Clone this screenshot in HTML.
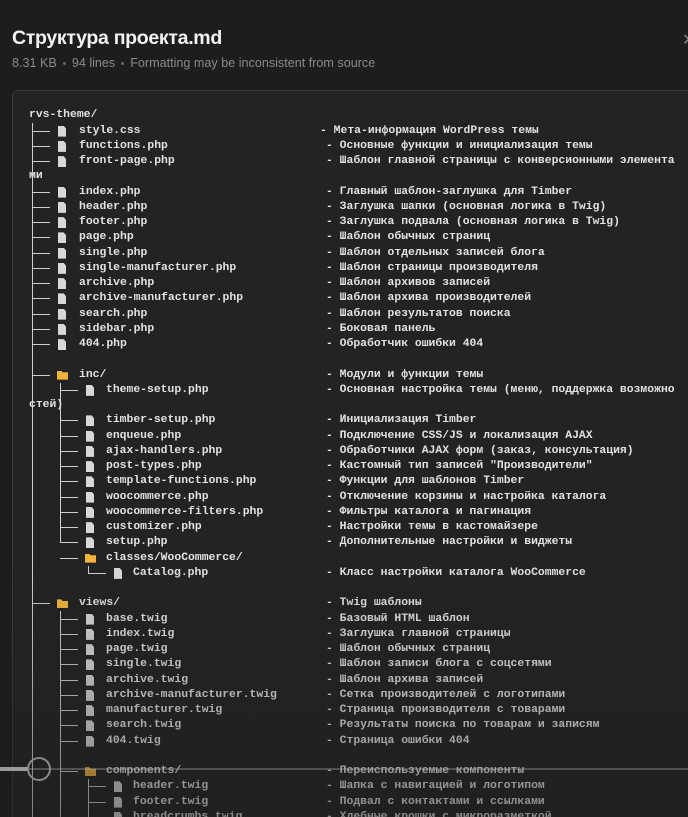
<!DOCTYPE html>
<html><head><meta charset="utf-8"><style>
html,body{margin:0;padding:0;overflow:hidden;width:688px;height:817px;}
body{background:#1d1d1d;position:relative;font-family:"Liberation Sans","Noto Sans CJK SC",sans-serif;}
.t{position:absolute;left:12px;top:27px;font-size:19.5px;font-weight:bold;color:#f2f2f2;letter-spacing:-0.3px;}
.m{position:absolute;left:12px;top:56px;font-size:12.6px;color:#8a8a8a;}
.m b{display:inline-block;width:3px;height:3px;border-radius:50%;background:#666;vertical-align:middle;margin:0 6px;}
.x{position:absolute;left:682px;top:30px;color:#888;font-size:16px;}
.box{position:absolute;left:12px;top:90px;width:700px;height:740px;border:1px solid #3a3a3a;border-radius:7px;background:#232323;}
.rows{position:absolute;left:0;top:108.4px;width:688px;font-family:"Liberation Mono","DejaVu Sans Mono",monospace;font-size:11.4px;font-weight:bold;color:#e2e2e2;}
.r{position:relative;height:15.25px;line-height:15.25px;white-space:pre;}
.r span{position:absolute;top:0;}
.h{position:absolute;top:7px;width:18px;height:1px;background:#cfcfcf;}
.f{position:absolute;top:2px;width:8px;height:11px;background:#d8d8d8;clip-path:polygon(0 0,70% 0,100% 25%,100% 100%,0 100%);}
.d{position:absolute;top:3px;width:11px;height:9px;background:#f2b43a;clip-path:polygon(0 0,40% 0,50% 18%,100% 18%,100% 100%,0 100%);}
.v{position:absolute;width:1px;background:#cfcfcf;}
.fade{position:absolute;left:0;top:560px;width:688px;height:257px;background:linear-gradient(rgba(29,29,29,0),rgba(29,29,29,0.45));}
</style></head><body>
<div class="t">Структура проекта.md</div>
<div class="m">8.31 KB<b></b>94 lines<b></b>Formatting may be inconsistent from source</div>
<div class="x">✕</div>
<div class="box"></div>
<div class="v" style="left:32px;top:123px;height:700px"></div>
<div class="v" style="left:60px;top:383px;height:160px"></div>
<div class="v" style="left:88px;top:566px;height:8px"></div>
<div class="v" style="left:60px;top:611px;height:210px"></div>
<div class="v" style="left:88px;top:779px;height:45px"></div>
<div class="rows">
<div class="r"><span style="left:29px">rvs-theme/</span></div>
<div class="r"><i class="h" style="left:32px"></i><i class="f" style="left:58px"></i><span style="left:79px">style.css</span><span style="left:320px">- Мета-информация WordPress темы</span></div>
<div class="r"><i class="h" style="left:32px"></i><i class="f" style="left:58px"></i><span style="left:79px">functions.php</span><span style="left:326px">- Основные функции и инициализация темы</span></div>
<div class="r"><i class="h" style="left:32px"></i><i class="f" style="left:58px"></i><span style="left:79px">front-page.php</span><span style="left:326px">- Шаблон главной страницы с конверсионными элемента</span></div>
<div class="r"><span style="left:29px">ми</span></div>
<div class="r"><i class="h" style="left:32px"></i><i class="f" style="left:58px"></i><span style="left:79px">index.php</span><span style="left:326px">- Главный шаблон-заглушка для Timber</span></div>
<div class="r"><i class="h" style="left:32px"></i><i class="f" style="left:58px"></i><span style="left:79px">header.php</span><span style="left:326px">- Заглушка шапки (основная логика в Twig)</span></div>
<div class="r"><i class="h" style="left:32px"></i><i class="f" style="left:58px"></i><span style="left:79px">footer.php</span><span style="left:326px">- Заглушка подвала (основная логика в Twig)</span></div>
<div class="r"><i class="h" style="left:32px"></i><i class="f" style="left:58px"></i><span style="left:79px">page.php</span><span style="left:326px">- Шаблон обычных страниц</span></div>
<div class="r"><i class="h" style="left:32px"></i><i class="f" style="left:58px"></i><span style="left:79px">single.php</span><span style="left:326px">- Шаблон отдельных записей блога</span></div>
<div class="r"><i class="h" style="left:32px"></i><i class="f" style="left:58px"></i><span style="left:79px">single-manufacturer.php</span><span style="left:326px">- Шаблон страницы производителя</span></div>
<div class="r"><i class="h" style="left:32px"></i><i class="f" style="left:58px"></i><span style="left:79px">archive.php</span><span style="left:326px">- Шаблон архивов записей</span></div>
<div class="r"><i class="h" style="left:32px"></i><i class="f" style="left:58px"></i><span style="left:79px">archive-manufacturer.php</span><span style="left:326px">- Шаблон архива производителей</span></div>
<div class="r"><i class="h" style="left:32px"></i><i class="f" style="left:58px"></i><span style="left:79px">search.php</span><span style="left:326px">- Шаблон результатов поиска</span></div>
<div class="r"><i class="h" style="left:32px"></i><i class="f" style="left:58px"></i><span style="left:79px">sidebar.php</span><span style="left:326px">- Боковая панель</span></div>
<div class="r"><i class="h" style="left:32px"></i><i class="f" style="left:58px"></i><span style="left:79px">404.php</span><span style="left:326px">- Обработчик ошибки 404</span></div>
<div class="r"></div>
<div class="r"><i class="h" style="left:32px"></i><i class="d" style="left:57px"></i><span style="left:79px">inc/</span><span style="left:326px">- Модули и функции темы</span></div>
<div class="r"><i class="h" style="left:60px"></i><i class="f" style="left:86px"></i><span style="left:106px">theme-setup.php</span><span style="left:326px">- Основная настройка темы (меню, поддержка возможно</span></div>
<div class="r"><span style="left:29px">стей)</span></div>
<div class="r"><i class="h" style="left:60px"></i><i class="f" style="left:86px"></i><span style="left:106px">timber-setup.php</span><span style="left:326px">- Инициализация Timber</span></div>
<div class="r"><i class="h" style="left:60px"></i><i class="f" style="left:86px"></i><span style="left:106px">enqueue.php</span><span style="left:326px">- Подключение CSS/JS и локализация AJAX</span></div>
<div class="r"><i class="h" style="left:60px"></i><i class="f" style="left:86px"></i><span style="left:106px">ajax-handlers.php</span><span style="left:326px">- Обработчики AJAX форм (заказ, консультация)</span></div>
<div class="r"><i class="h" style="left:60px"></i><i class="f" style="left:86px"></i><span style="left:106px">post-types.php</span><span style="left:326px">- Кастомный тип записей "Производители"</span></div>
<div class="r"><i class="h" style="left:60px"></i><i class="f" style="left:86px"></i><span style="left:106px">template-functions.php</span><span style="left:326px">- Функции для шаблонов Timber</span></div>
<div class="r"><i class="h" style="left:60px"></i><i class="f" style="left:86px"></i><span style="left:106px">woocommerce.php</span><span style="left:326px">- Отключение корзины и настройка каталога</span></div>
<div class="r"><i class="h" style="left:60px"></i><i class="f" style="left:86px"></i><span style="left:106px">woocommerce-filters.php</span><span style="left:326px">- Фильтры каталога и пагинация</span></div>
<div class="r"><i class="h" style="left:60px"></i><i class="f" style="left:86px"></i><span style="left:106px">customizer.php</span><span style="left:326px">- Настройки темы в кастомайзере</span></div>
<div class="r"><i class="h" style="left:60px"></i><i class="f" style="left:86px"></i><span style="left:106px">setup.php</span><span style="left:326px">- Дополнительные настройки и виджеты</span></div>
<div class="r"><i class="h" style="left:60px"></i><i class="d" style="left:85px"></i><span style="left:106px">classes/WooCommerce/</span></div>
<div class="r"><i class="h" style="left:88px"></i><i class="f" style="left:114px"></i><span style="left:133px">Catalog.php</span><span style="left:326px">- Класс настройки каталога WooCommerce</span></div>
<div class="r"></div>
<div class="r"><i class="h" style="left:32px"></i><i class="d" style="left:57px"></i><span style="left:79px">views/</span><span style="left:326px">- Twig шаблоны</span></div>
<div class="r"><i class="h" style="left:60px"></i><i class="f" style="left:86px"></i><span style="left:106px">base.twig</span><span style="left:326px">- Базовый HTML шаблон</span></div>
<div class="r"><i class="h" style="left:60px"></i><i class="f" style="left:86px"></i><span style="left:106px">index.twig</span><span style="left:326px">- Заглушка главной страницы</span></div>
<div class="r"><i class="h" style="left:60px"></i><i class="f" style="left:86px"></i><span style="left:106px">page.twig</span><span style="left:326px">- Шаблон обычных страниц</span></div>
<div class="r"><i class="h" style="left:60px"></i><i class="f" style="left:86px"></i><span style="left:106px">single.twig</span><span style="left:326px">- Шаблон записи блога с соцсетями</span></div>
<div class="r"><i class="h" style="left:60px"></i><i class="f" style="left:86px"></i><span style="left:106px">archive.twig</span><span style="left:326px">- Шаблон архива записей</span></div>
<div class="r"><i class="h" style="left:60px"></i><i class="f" style="left:86px"></i><span style="left:106px">archive-manufacturer.twig</span><span style="left:326px">- Сетка производителей с логотипами</span></div>
<div class="r"><i class="h" style="left:60px"></i><i class="f" style="left:86px"></i><span style="left:106px">manufacturer.twig</span><span style="left:326px">- Страница производителя с товарами</span></div>
<div class="r"><i class="h" style="left:60px"></i><i class="f" style="left:86px"></i><span style="left:106px">search.twig</span><span style="left:326px">- Результаты поиска по товарам и записям</span></div>
<div class="r"><i class="h" style="left:60px"></i><i class="f" style="left:86px"></i><span style="left:106px">404.twig</span><span style="left:326px">- Страница ошибки 404</span></div>
<div class="r"></div>
<div class="r"><i class="h" style="left:60px"></i><i class="d" style="left:85px"></i><span style="left:106px">components/</span><span style="left:326px">- Переиспользуемые компоненты</span></div>
<div class="r"><i class="h" style="left:88px"></i><i class="f" style="left:114px"></i><span style="left:133px">header.twig</span><span style="left:326px">- Шапка с навигацией и логотипом</span></div>
<div class="r"><i class="h" style="left:88px"></i><i class="f" style="left:114px"></i><span style="left:133px">footer.twig</span><span style="left:326px">- Подвал с контактами и ссылками</span></div>
<div class="r"><i class="h" style="left:88px"></i><i class="f" style="left:114px"></i><span style="left:133px">breadcrumbs.twig</span><span style="left:326px">- Хлебные крошки с микроразметкой</span></div>
</div>
<div class="fade"></div>
<div style="position:absolute;left:0;top:768px;width:688px;height:2px;background:rgba(170,170,170,0.35)"></div>
<div style="position:absolute;left:0;top:767px;width:28px;height:4px;background:#9a9a9a"></div>
<div style="position:absolute;left:27px;top:757px;width:20px;height:20px;border:2px solid #8a8a8a;border-radius:50%"></div>
</body></html>
